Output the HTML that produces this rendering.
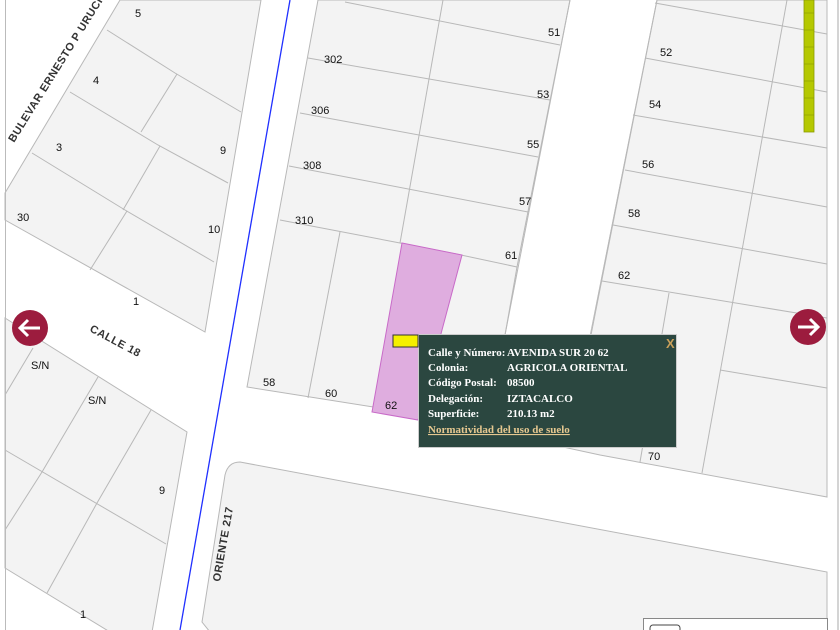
<!DOCTYPE html>
<html><head><meta charset="utf-8"><style>
html,body{margin:0;padding:0;background:#fff;width:840px;height:630px;overflow:hidden}
svg{display:block}
.l{fill:#f3f3f3;stroke:#b8b8b8;stroke-width:1}
.ln{stroke:#b8b8b8;stroke-width:1;fill:none}
.t{font-family:"Liberation Sans",sans-serif;font-size:11px;fill:#111}
.s{font-family:"Liberation Sans",sans-serif;font-size:11px;fill:#333;font-weight:bold;letter-spacing:0.5px}
.p{font-family:"Liberation Serif",serif;font-size:11px;font-weight:bold;fill:#fff}
</style></head><body>
<svg width="840" height="630" viewBox="0 0 840 630">
<rect width="840" height="630" fill="#fff"/>
<!-- left upper block -->
<polygon class="l" points="5,193 120,0 261,0 205,332 5,220"/>
<polyline class="ln" points="107,30 175,73 241,112"/>
<polyline class="ln" points="70,92 158,145 228,183"/>
<polyline class="ln" points="32,153 125,210 214,262"/>
<line class="ln" x1="177" y1="74" x2="141" y2="132"/>
<line class="ln" x1="160" y1="146" x2="123" y2="210"/>
<line class="ln" x1="127" y1="211" x2="90" y2="270"/>
<!-- left lower block -->
<polygon class="l" points="5,318 187,432 152,632 110,632 5,568"/>
<line class="ln" x1="5" y1="450" x2="166" y2="544"/>
<polyline class="ln" points="33,348 5,395"/>
<polyline class="ln" points="98,377 42,472 5,530"/>
<polyline class="ln" points="151,410 97,503 47,593"/>
<!-- central block -->
<polygon class="l" points="318,0 570,0 517,267 505,335 590,335 657,0 827,0 827,497 600,455 392,410 247,387"/>
<polyline class="ln" points="345,2 560,45"/>
<polyline class="ln" points="308,58 550,100"/>
<polyline class="ln" points="300,113 538,157"/>
<polyline class="ln" points="289,166 528,212"/>
<polyline class="ln" points="280,220 400,243 461,255 517,267"/>
<line class="ln" x1="443" y1="0" x2="400" y2="243"/>
<line class="ln" x1="340" y1="232" x2="308" y2="398"/>
<!-- white road between (cover) -->
<polygon points="571,0 656,0 590,334 506,334 518,267" fill="#fff"/>
<line class="ln" x1="570" y1="0" x2="505" y2="335"/>
<line class="ln" x1="657" y1="0" x2="590" y2="340"/>
<!-- right block lines -->
<polyline class="ln" points="655,3 827,34"/>
<polyline class="ln" points="645,58 827,92"/>
<polyline class="ln" points="633,115 827,148"/>
<polyline class="ln" points="625,170 827,207"/>
<polyline class="ln" points="613,225 827,264"/>
<polyline class="ln" points="602,281 827,318"/>
<polyline class="ln" points="720,370 827,388"/>
<line class="ln" x1="787" y1="0" x2="702" y2="473"/>
<line class="ln" x1="669" y1="293" x2="640" y2="462"/>
<line class="ln" x1="827" y1="0" x2="827" y2="497"/>
<!-- pink parcel -->
<polygon points="402,243 462,255 418,420 372,412" fill="#dfaddf" stroke="#c86ac8" stroke-width="1"/>
<!-- bottom block -->
<path class="l" d="M240,462 L827,572 L827,632 L210,632 L202,622 L225,475 Q228,462 240,462 Z"/>
<!-- left border -->
<line x1="5.5" y1="0" x2="5.5" y2="630" stroke="#bbb"/>
<line x1="838" y1="0" x2="838" y2="630" stroke="#aaa"/>
<!-- blue line -->
<line x1="290" y1="0" x2="180" y2="630" stroke="#2030ff" stroke-width="1.3"/>
<!-- labels -->
<text class="t" x="135" y="17">5</text>
<text class="t" x="93" y="84">4</text>
<text class="t" x="56" y="151">3</text>
<text class="t" x="220" y="154">9</text>
<text class="t" x="17" y="221">30</text>
<text class="t" x="208" y="233">10</text>
<text class="t" x="133" y="305">1</text>
<text class="t" x="31" y="369">S/N</text>
<text class="t" x="88" y="404">S/N</text>
<text class="t" x="159" y="494">9</text>
<text class="t" x="80" y="618">1</text>
<text class="t" x="324" y="63">302</text>
<text class="t" x="311" y="114">306</text>
<text class="t" x="303" y="169">308</text>
<text class="t" x="295" y="224">310</text>
<text class="t" x="548" y="36">51</text>
<text class="t" x="537" y="98">53</text>
<text class="t" x="527" y="148">55</text>
<text class="t" x="519" y="205">57</text>
<text class="t" x="505" y="259">61</text>
<text class="t" x="263" y="386">58</text>
<text class="t" x="325" y="397">60</text>
<text class="t" x="385" y="409">62</text>
<text class="t" x="660" y="56">52</text>
<text class="t" x="649" y="108">54</text>
<text class="t" x="642" y="168">56</text>
<text class="t" x="628" y="217">58</text>
<text class="t" x="618" y="279">62</text>
<text class="t" x="648" y="460">70</text>
<text class="s" transform="translate(14,143) rotate(-58)">BULEVAR ERNESTO P URUCH</text>
<text class="s" transform="translate(89,331) rotate(28)">CALLE 18</text>
<text class="s" transform="translate(220,582) rotate(-80)">ORIENTE 217</text>
<!-- scale bar -->
<rect x="804" y="0" width="10" height="132" fill="#b5c800" stroke="#8a9a00" stroke-width="0.8"/>
<g stroke="#8a9a00" stroke-width="0.6">
<line x1="804" y1="13" x2="814" y2="13"/><line x1="804" y1="30" x2="814" y2="30"/>
<line x1="804" y1="47" x2="814" y2="47"/><line x1="804" y1="64" x2="814" y2="64"/>
<line x1="804" y1="81" x2="814" y2="81"/><line x1="804" y1="98" x2="814" y2="98"/>
<line x1="804" y1="115" x2="814" y2="115"/></g>
<!-- arrows -->
<circle cx="30" cy="328" r="18" fill="#9c1c3e"/>
<path d="M40,328 H21 M28,320 L20,328 L28,336" stroke="#fff" stroke-width="3" fill="none"/>
<circle cx="808" cy="327" r="18" fill="#9c1c3e"/>
<path d="M798,327 H817 M810,319 L818,327 L810,335" stroke="#fff" stroke-width="3" fill="none"/>
<!-- overview box -->
<rect x="643.5" y="618.5" width="184" height="14" fill="#fff" stroke="#888"/>
<rect x="650" y="625" width="30" height="8" rx="3" fill="none" stroke="#444"/>
<!-- popup -->
<rect x="418.5" y="334.5" width="258" height="113" fill="#2b4740" stroke="#ccc"/>
<rect x="393" y="335" width="25" height="12" fill="#f5f000" stroke="#333"/>
<text x="666" y="348" font-family="Liberation Sans,sans-serif" font-size="13" font-weight="bold" fill="#c9a05a">X</text>
<text class="p" x="428" y="356">Calle y Número:</text><text class="p" x="507" y="356">AVENIDA SUR 20 62</text>
<text class="p" x="428" y="371">Colonia:</text><text class="p" x="507" y="371">AGRICOLA ORIENTAL</text>
<text class="p" x="428" y="386">Código Postal:</text><text class="p" x="507" y="386">08500</text>
<text class="p" x="428" y="402">Delegación:</text><text class="p" x="507" y="402">IZTACALCO</text>
<text class="p" x="428" y="417">Superficie:</text><text class="p" x="507" y="417">210.13 m2</text>
<text class="p" x="428" y="433" fill="#e6c890" text-decoration="underline" style="fill:#e6c890">Normatividad del uso de suelo</text>
</svg>
</body></html>
